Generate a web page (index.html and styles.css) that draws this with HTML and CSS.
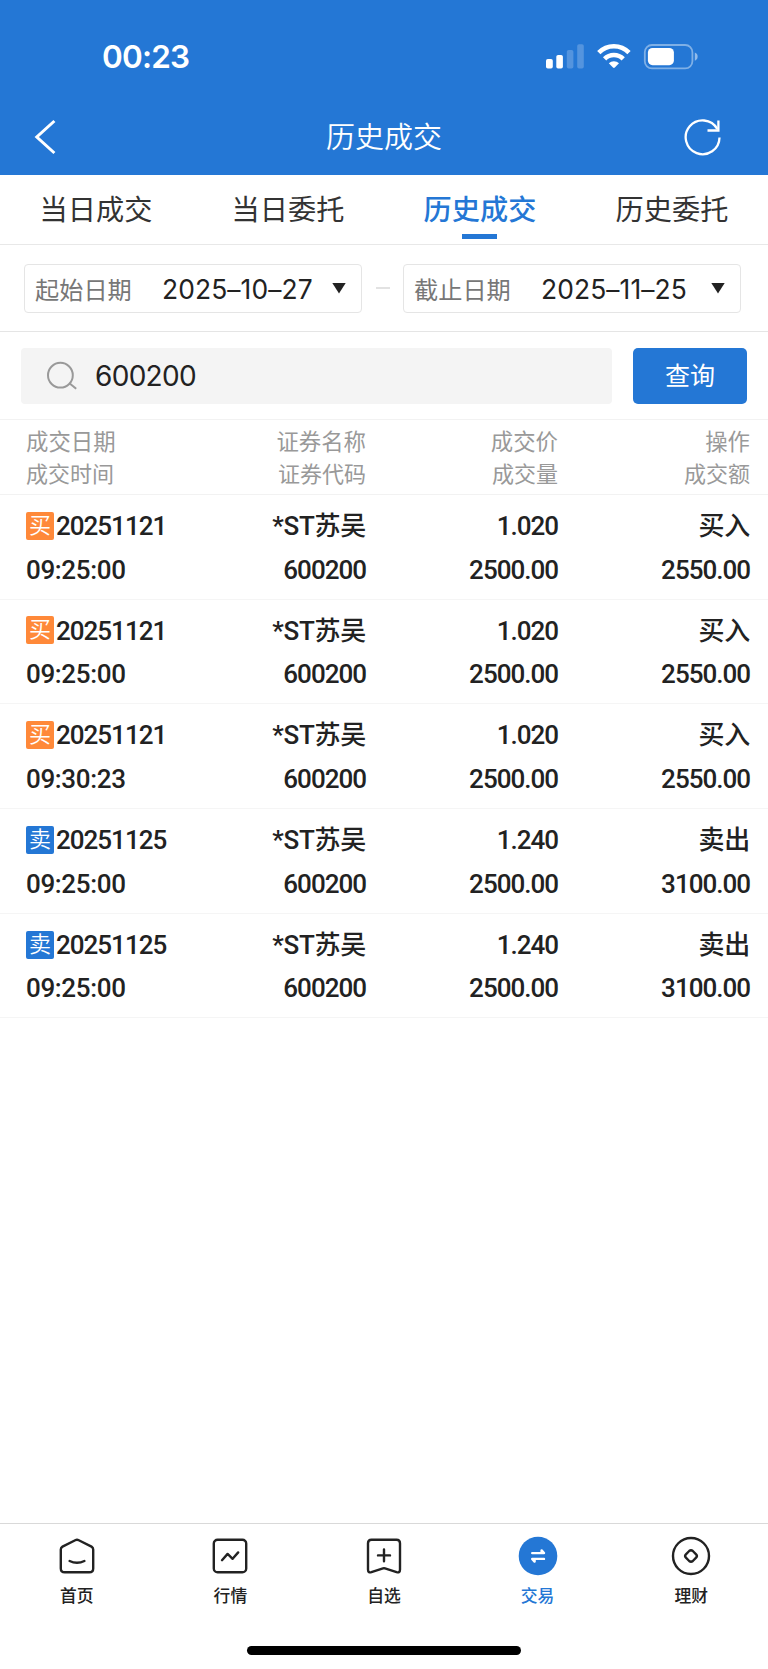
FILE: index.html
```html
<!DOCTYPE html>
<html lang="zh-CN">
<head>
<meta charset="utf-8">
<title>历史成交</title>
<link rel="stylesheet" href="styles.css">
</head>
<body>
<div class="app">
  <header class="top">
    <div class="status">
      <span class="clock">00:23</span>
      <svg class="status-icons" width="154" height="28" viewBox="0 0 154 28" fill="#fff">
        <rect x="1" y="16" width="6.8" height="9.5" rx="1.8"/>
        <rect x="11.3" y="12" width="6.6" height="13.5" rx="1.8"/>
        <rect x="21.8" y="7" width="6.6" height="18.5" rx="1.8" opacity=".22"/>
        <rect x="32.2" y="1.2" width="6.6" height="24.3" rx="1.8" opacity=".22"/>
        <g fill="none" stroke="#fff" stroke-width="4.6">
          <path d="M53.8 9.6a21 21 0 0 1 30.2 0"/>
          <path d="M59.6 15.9a13 13 0 0 1 18.6 0"/>
        </g>
        <path d="M63.8 20.2a7.6 7.6 0 0 1 10.2 0l-4.2 4.4q-.9.9-1.8 0z"/>
        <rect x="99.8" y="2" width="47.6" height="23.4" rx="7.2" fill="none" stroke="#fff" stroke-width="1.8" opacity=".42"/>
        <rect x="102.9" y="5" width="26" height="17.2" rx="4.6"/>
        <path d="M149.8 9.6c3.8 1.2 3.8 7 0 8.2z" opacity=".5"/>
      </svg>
    </div>
    <div class="titlebar">
      <svg class="back" width="24" height="38" viewBox="0 0 24 38" fill="none" stroke="#fff" stroke-width="3"><path d="M20.4 3 2.8 19 20.4 35"/></svg>
      <h1 class="title">历史成交</h1>
      <svg class="reload" width="40" height="40" viewBox="0 0 40 40" fill="none" stroke="#fff" stroke-width="2.3"><path d="M36.5 20.5A16.9 16.9 0 1 1 34.3 12"/><path d="M35.4 3.5V13.5H24.5"/></svg>
    </div>
  </header>

  <nav class="tabs">
    <span class="tab">当日成交</span>
    <span class="tab">当日委托</span>
    <span class="tab active">历史成交</span>
    <span class="tab">历史委托</span>
  </nav>

  <section class="dates">
    <div class="date"><span class="date-label">起始日期</span><span class="date-value">2025–10–27</span><i class="caret"></i></div>
    <i class="dash"></i>
    <div class="date"><span class="date-label">截止日期</span><span class="date-value">2025–11–25</span><i class="caret"></i></div>
  </section>

  <section class="search">
    <div class="field">
      <svg width="32" height="32" viewBox="0 0 32 32" fill="none" stroke="#999" stroke-width="2"><circle cx="14.4" cy="15.2" r="12.4"/><path d="M23.4 23.2 30.2 28.8"/></svg>
      <span class="query">600200</span>
    </div>
    <span class="button">查询</span>
  </section>

  <section class="thead">
    <div>成交日期<br><span class="tight">成交时间</span></div>
    <div>证券名称<br><span class="tight">证券代码</span></div>
    <div>成交价<br><span class="tight">成交量</span></div>
    <div>操作<br><span class="tight">成交额</span></div>
  </section>

  <main class="rows">
    <div class="row">
      <div><span class="day"><b class="tag buy">买</b>20251121</span><span class="time">09:25:00</span></div>
      <div><span class="name">*ST苏吴</span><span>600200</span></div>
      <div><span>1.020</span><span>2500.00</span></div>
      <div><span class="name">买入</span><span>2550.00</span></div>
    </div>
    <div class="row">
      <div><span class="day"><b class="tag buy">买</b>20251121</span><span class="time">09:25:00</span></div>
      <div><span class="name">*ST苏吴</span><span>600200</span></div>
      <div><span>1.020</span><span>2500.00</span></div>
      <div><span class="name">买入</span><span>2550.00</span></div>
    </div>
    <div class="row">
      <div><span class="day"><b class="tag buy">买</b>20251121</span><span class="time">09:30:23</span></div>
      <div><span class="name">*ST苏吴</span><span>600200</span></div>
      <div><span>1.020</span><span>2500.00</span></div>
      <div><span class="name">买入</span><span>2550.00</span></div>
    </div>
    <div class="row">
      <div><span class="day"><b class="tag sell">卖</b>20251125</span><span class="time">09:25:00</span></div>
      <div><span class="name">*ST苏吴</span><span>600200</span></div>
      <div><span>1.240</span><span>2500.00</span></div>
      <div><span class="name">卖出</span><span>3100.00</span></div>
    </div>
    <div class="row">
      <div><span class="day"><b class="tag sell">卖</b>20251125</span><span class="time">09:25:00</span></div>
      <div><span class="name">*ST苏吴</span><span>600200</span></div>
      <div><span>1.240</span><span>2500.00</span></div>
      <div><span class="name">卖出</span><span>3100.00</span></div>
    </div>
  </main>

  <footer class="bottom">
    <div class="items">
      <div class="item">
        <svg class="icon" viewBox="0 0 40 40"><path d="M5.5 10.6 18.2 4.2Q20 3.3 21.8 4.2L34.5 10.6Q36.2 11.6 36.2 13.6V32.4Q36.2 36.3 32.3 36.3H7.7Q3.8 36.3 3.8 32.4V13.6Q3.8 11.6 5.5 10.6Z"/><path d="M12.6 25q7.4 3.6 14.8 0"/></svg>
        <span>首页</span>
      </div>
      <div class="item">
        <svg class="icon" viewBox="0 0 40 40"><rect x="3.8" y="3.8" width="32.4" height="32.5" rx="3.8"/><path d="M12 24.2 17.6 17.9 22.6 22.8 28.2 16.4"/></svg>
        <span>行情</span>
      </div>
      <div class="item">
        <svg class="icon" viewBox="0 0 40 40"><path d="M7.5 3.8H32.5Q36 3.8 36 7.3V33.6Q36 37.2 32.6 36.2L21 32.4Q20 32.1 19 32.4L7.4 36.2Q4 37.2 4 33.6V7.3Q4 3.8 7.5 3.8Z"/><path d="M14 19.4H26M20 13.5V25.3"/></svg>
        <span>自选</span>
      </div>
      <div class="item active">
        <svg class="icon" viewBox="0 0 40 40"><circle class="solid" cx="20" cy="20" r="19.3"/><path class="arrow" d="M14.2 17.1H26L23.6 14.4V17M26 22.9H14.2L16.6 25.6V23"/></svg>
        <span>交易</span>
      </div>
      <div class="item">
        <svg class="icon" viewBox="0 0 40 40"><circle cx="20" cy="20" r="18"/><path d="M18.2 15 14.9 18.3Q13.3 20 14.9 21.7L18.2 25Q20 26.6 21.8 25L25.1 21.7Q26.7 20 25.1 18.3L21.8 15Q20 13.4 18.2 15Z"/></svg>
        <span>理财</span>
      </div>
    </div>
    <i class="home-bar"></i>
  </footer>
</div>
</body>
</html>
```
FILE: styles.css
```css
* { box-sizing: border-box; }
body {
  margin: 0;
  background: #fff;
  color: #222;
  font-family: Inter, "Noto Sans CJK SC", sans-serif;
}
svg { display: block; }
.app { width: 768px; height: 1669px; display: flex; flex-direction: column; overflow: hidden; }

.top { height: 175px; background: #2477d5; color: #fff; flex: none; }
.status { height: 100px; padding: 43px 69px 0 102px; display: flex; justify-content: space-between; align-items: flex-start; }
.clock { font-size: 31.5px; line-height: 28px; font-weight: 600; letter-spacing: -.8px; }
.titlebar { height: 75px; padding: 0 45px 0 34px; display: flex; align-items: center; justify-content: space-between; }
.back { margin-top: -1px; }
.title { margin: 1px 0 0; font-size: 29px; font-weight: 350; line-height: 40px; padding-left: 27px; }
.reload { margin-top: -1px; }

.tabs { height: 70px; display: grid; grid-template-columns: repeat(4, 192px); border-bottom: 1px solid #e8e8e8; flex: none; }
.tab { display: flex; justify-content: center; font-size: 28.2px; line-height: 70px; height: 69px; color: #333; }
.tab.active { color: #2477d5; font-weight: 500; position: relative; }
.tab.active::after { content: ""; position: absolute; left: 78px; bottom: 5px; width: 35px; height: 5px; background: #2477d5; }

.dates { height: 87px; padding: 0 27px 0 24px; display: flex; align-items: center; justify-content: space-between; border-bottom: 1px solid #e5e5e5; flex: none; }
.date { width: 338px; height: 49px; border: 1px solid #e5e5e5; border-radius: 4px; display: flex; align-items: center; padding: 0 15px 0 10px; }
.date-label { width: 127px; font-size: 24.2px; color: #777; }
.date-value { flex: 1; padding-top: 1px; font-size: 26.4px; letter-spacing: .1px; white-space: nowrap; }
.caret { width: 14px; height: 11px; background: #222; clip-path: polygon(0 0, 100% 0, 50% 100%); }
.dash { width: 14px; height: 2px; background: #e2e2e2; }

.search { height: 88px; padding: 0 21px; display: flex; align-items: center; justify-content: space-between; border-bottom: 1px solid #f2f2f2; flex: none; }
.field { width: 591px; height: 56px; background: #f4f4f4; border-radius: 4px; display: flex; align-items: center; padding-left: 25px; gap: 17px; }
.query { padding-top: 1px; font-size: 28px; letter-spacing: -.7px; }
.button { width: 114px; height: 56px; background: #2477d5; color: #fff; border-radius: 5px; font-size: 25px; line-height: 57px; text-align: center; }

.thead, .row { display: grid; grid-template-columns: repeat(4, 192px); text-align: right; flex: none; }
.thead > div, .row > div { padding-right: 18px; }
.thead > div:first-child, .row > div:first-child { padding: 0 0 0 26px; text-align: left; }
.thead { height: 75px; padding-top: 6px; font-size: 22.4px; line-height: 31.8px; color: #999; border-bottom: 1px solid #f2f2f2; }
.tight { font-size: 22px; }

.rows { flex: 1; }
.row { height: 104.7px; padding-top: 10px; font: 500 26px/43.5px Roboto, "Noto Sans CJK SC", sans-serif; letter-spacing: -1px; border-bottom: 1px solid #f5f5f5; }
.row > div { display: flex; flex-direction: column; }
.name { letter-spacing: -.25px; }
.time { letter-spacing: -.35px; }
.day { display: flex; align-items: center; }
.tag { width: 28px; height: 28px; margin: -2px 2px 0 0; border-radius: 2px; color: #fff; font-size: 22px; font-weight: 350; line-height: 27px; text-align: center; letter-spacing: 0; }
.buy { background: #ff8939; }
.sell { background: #2477d5; }

.bottom { height: 146px; border-top: 1px solid #d9d9d9; display: flex; flex-direction: column; align-items: center; flex: none; }
.items { width: 768px; height: 122px; display: grid; grid-template-columns: repeat(5, 1fr); }
.item { display: flex; flex-direction: column; align-items: center; padding-top: 12px; font-size: 16.8px; line-height: 24px; font-weight: 500; gap: 8px; }
.icon { width: 40px; height: 40px; fill: none; stroke: #222; stroke-width: 2.4; stroke-linecap: round; stroke-linejoin: round; }
.item.active { color: #2477d5; }
.icon .solid { fill: #2477d5; stroke: none; }
.icon .arrow { stroke: #fff; stroke-width: 2.4; }
.home-bar { width: 274px; height: 9px; border-radius: 5px; background: #000; }
```
